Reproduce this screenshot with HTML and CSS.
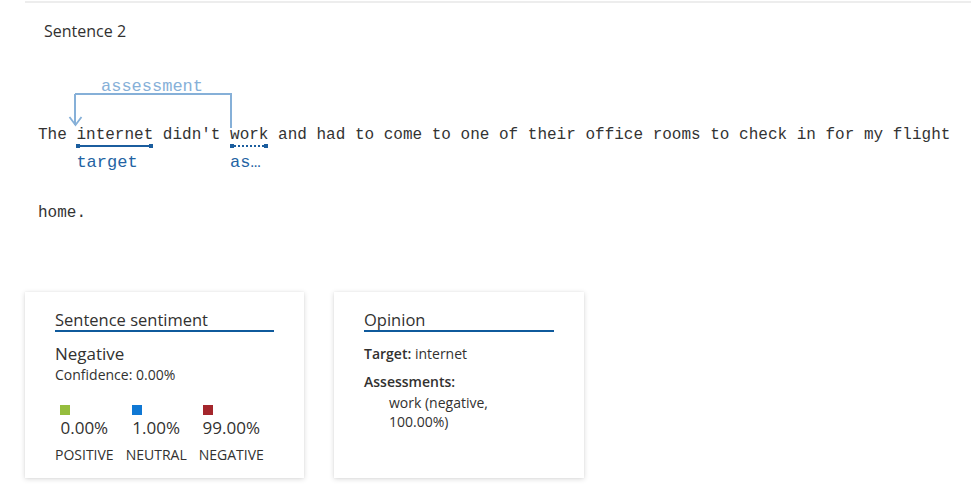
FILE: index.html
```html
<!DOCTYPE html>
<html>
<head>
<meta charset="utf-8">
<link rel="stylesheet" href="styles.css">
</head>
<body>
<div class="panel">
  <div class="title">Sentence 2</div>
  <div class="sentence">
    <svg class="arc" width="200" height="70" viewBox="0 0 200 70">
      <text x="63" y="21" class="arc-label">assessment</text>
      <path d="M37 24 H193 V58" fill="none" stroke="#86b0d8" stroke-width="2"/>
      <path d="M37 24 V55" fill="none" stroke="#86b0d8" stroke-width="2"/>
      <path d="M31.5 47 L37.5 55 L43.5 47" fill="none" stroke="#86b0d8" stroke-width="1.8"/>
    </svg>
    <span class="tok"><span class="w">The</span></span>
    <span class="tok"><span class="w">internet</span><span class="mark"><i class="cap"></i><i class="bar"></i><i class="cap"></i></span><span class="lab">target</span></span>
    <span class="tok"><span class="w">didn't</span></span>
    <span class="tok"><span class="w">work</span><span class="mark"><i class="cap"></i><i class="bar dot"></i><i class="cap"></i></span><span class="lab">as…</span></span>
    <span class="tok"><span class="w">and</span></span>
    <span class="tok"><span class="w">had</span></span>
    <span class="tok"><span class="w">to</span></span>
    <span class="tok"><span class="w">come</span></span>
    <span class="tok"><span class="w">to</span></span>
    <span class="tok"><span class="w">one</span></span>
    <span class="tok"><span class="w">of</span></span>
    <span class="tok"><span class="w">their</span></span>
    <span class="tok"><span class="w">office</span></span>
    <span class="tok"><span class="w">rooms</span></span>
    <span class="tok"><span class="w">to</span></span>
    <span class="tok"><span class="w">check</span></span>
    <span class="tok"><span class="w">in</span></span>
    <span class="tok"><span class="w">for</span></span>
    <span class="tok"><span class="w">my</span></span>
    <span class="tok"><span class="w">flight</span></span>
    <span class="tok"><span class="w">home.</span></span>
  </div>
  <div class="cards">
    <div class="card card-wide">
      <div class="card-h">Sentence sentiment</div>
      <div class="big">Negative</div>
      <div class="small">Confidence: 0.00%</div>
      <div class="scores">
        <div class="score">
          <div class="val"><i class="sq pos"></i><span>0.00%</span></div>
          <div class="lbl">POSITIVE</div>
        </div>
        <div class="score">
          <div class="val"><i class="sq neu"></i><span>1.00%</span></div>
          <div class="lbl">NEUTRAL</div>
        </div>
        <div class="score">
          <div class="val"><i class="sq neg"></i><span>99.00%</span></div>
          <div class="lbl">NEGATIVE</div>
        </div>
      </div>
    </div>
    <div class="card card-narrow">
      <div class="card-h">Opinion</div>
      <div class="small op-row"><b>Target:</b> internet</div>
      <div class="small op-row2"><b>Assessments:</b></div>
      <div class="small op-item">work (negative, 100.00%)</div>
    </div>
  </div>
</div>
</body>
</html>
```

FILE: styles.css
```css
html, body {
  margin: 0;
  padding: 0;
  background: #fff;
}
body {
  font-family: "Open Sans", "Noto Sans", sans-serif;
  color: #323130;
}
.panel {
  margin-top: 1px;
  border-top: 2px solid #ededed;
  margin-left: 25px;
  padding-bottom: 20px;
}
.title {
  font-size: 16px;
  line-height: 22px;
  padding: 17px 0 0 19px;
  height: 22px;
}
.sentence {
  position: relative;
  margin-top: 59px;
  margin-left: 13px;
  font-family: "Liberation Mono", monospace;
  font-size: 16px;
  line-height: 0;
  color: #333;
}
.arc {
  position: absolute;
  left: 0;
  top: -31px;
  overflow: visible;
}
.arc-label {
  font-family: "Liberation Mono", monospace;
  font-size: 17px;
  fill: #86b0d8;
}
.tok {
  display: inline-flex;
  flex-direction: column;
  vertical-align: top;
  height: 78px;
  padding-top: 24px;
  box-sizing: border-box;
  line-height: 20px;
}
.w {
  display: block;
  height: 20px;
}
.mark {
  display: flex;
  align-items: center;
  height: 4px;
  margin-top: -1px;
}
.cap {
  width: 4px;
  height: 4px;
  background: #1b5d9e;
}
.bar {
  flex: 1;
  height: 0;
  border-top: 2px solid #1b5d9e;
}
.bar.dot {
  border-top-style: dotted;
}
.lab {
  color: #2463a3;
  font-size: 17px;
  line-height: 20px;
  margin-top: 5px;
}
.cards {
  display: flex;
  gap: 30px;
  margin-top: 35px;
}
.card {
  background: #fff;
  box-shadow: 0 1px 5px rgba(0,0,0,0.16), 0 0 1px rgba(0,0,0,0.08);
  padding: 18px 30px 0 30px;
  height: 168px;
  box-sizing: content-box;
}
.card-wide { width: 219px; }
.card-narrow { width: 190px; }
.card-h {
  font-size: 16.5px;
  line-height: 20px;
  border-bottom: 2px solid #0f5a9c;
}
.big {
  font-size: 17px;
  line-height: 22px;
  margin-top: 11px;
}
.small {
  font-size: 14px;
  line-height: 20px;
}
.scores {
  display: flex;
  gap: 12px;
  margin-top: 20px;
}
.score {
  display: flex;
  flex-direction: column;
  align-items: center;
}
.val {
  display: flex;
  flex-direction: column;
  align-items: flex-start;
  font-size: 17px;
  line-height: 22px;
}
.sq {
  width: 10px;
  height: 10px;
  margin-bottom: 2px;
}
.sq.pos { background: #95bd3d; }
.sq.neu { background: #0f78d4; }
.sq.neg { background: #a4262c; }
.lbl {
  font-size: 14px;
  line-height: 20px;
  margin-top: 6px;
}
b { font-weight: 600; }
.op-row { margin-top: 12px; }
.op-row2 { margin-top: 8px; }
.op-item {
  padding-left: 25px;
  width: 125px;
  line-height: 19px;
  margin-top: 1px;
}
```
